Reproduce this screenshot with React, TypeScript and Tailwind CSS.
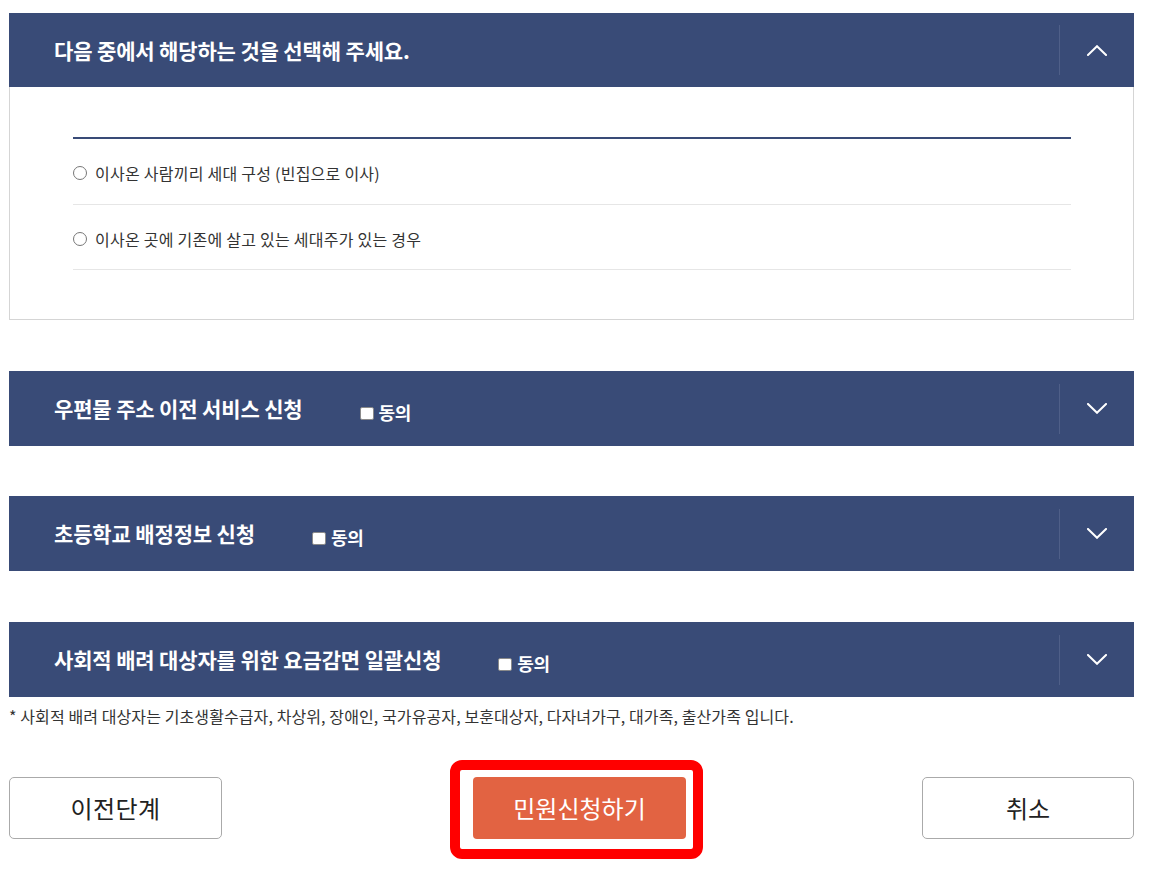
import React from "react";

const FONT = { fontFamily: '"Noto Sans CJK KR", "Noto Sans", sans-serif' };

function Chevron({ up }: { up?: boolean }) {
  return (
    <svg width="20" height="11" viewBox="0 0 20 11" fill="none">
      {up ? (
        <path d="M1 10 L10 1.2 L19 10" stroke="white" strokeWidth="2" strokeLinecap="square" />
      ) : (
        <path d="M1 1 L10 9.8 L19 1" stroke="white" strokeWidth="2" strokeLinecap="square" />
      )}
    </svg>
  );
}

function Header({ title, agree, up, h = "h-[75px]" }: { title: string; agree?: boolean; up?: boolean; h?: string }) {
  return (
    <div className={`flex items-center ${h} bg-[#394b77] pl-[45px]`}>
      <span className="text-white font-bold text-[21px] tracking-[-0.15px] leading-none whitespace-nowrap">{title}</span>
      {agree && (
        <span className="ml-[57px] mt-[6px] flex items-end gap-[5px]">
          <span className="w-[14px] h-[13px] bg-white border border-[#8a8a8a] rounded-[2px] mb-[1px]" />
          <span className="text-white font-bold text-[18px] tracking-[-0.3px] leading-none">동의</span>
        </span>
      )}
      <div className="ml-auto flex items-center h-full">
        <div className="w-px h-[50px] bg-[#4f5f88]" />
        <div className="w-[74px] flex items-center justify-center">
          <Chevron up={up} />
        </div>
      </div>
    </div>
  );
}

function RadioRow({ label, h }: { label: string; h: string }) {
  return (
    <div className={`flex items-center ${h} border-b border-[#e6e6e6] pt-[3px]`}>
      <span className="w-[14px] h-[14px] rounded-full border border-[#777] bg-white mr-[8px]" />
      <span className="text-[16px] tracking-[0.25px] text-[#333] leading-none">{label}</span>
    </div>
  );
}

export default function App() {
  return (
    <div className="w-[1149px] h-[872px] bg-white overflow-hidden" style={FONT}>
      <div className="pt-[13px] pl-[9px] w-[1134px]">
        <Header title="다음 중에서 해당하는 것을 선택해 주세요." up h="h-[74px]" />
        <div className="border border-t-0 border-[#d5d5d5] pl-[63px] pr-[62px] pt-[50px] pb-[49px]">
          <div className="h-[2px] bg-[#394b77]" />
          <RadioRow label="이사온 사람끼리 세대 구성 (빈집으로 이사)" h="h-[66px]" />
          <RadioRow label="이사온 곳에 기존에 살고 있는 세대주가 있는 경우" h="h-[65px]" />
        </div>

        <div className="mt-[51px]">
          <Header title="우편물 주소 이전 서비스 신청" agree />
        </div>
        <div className="mt-[50px]">
          <Header title="초등학교 배정정보 신청" agree />
        </div>
        <div className="mt-[51px]">
          <Header title="사회적 배려 대상자를 위한 요금감면 일괄신청" agree />
        </div>

        <p className="mt-[8px] text-[16px] leading-[22px] text-[#333] tracking-[0.1px] whitespace-nowrap">
          * 사회적 배려 대상자는 기초생활수급자, 차상위, 장애인, 국가유공자, 보훈대상자, 다자녀가구, 대가족, 출산가족 입니다.
        </p>

        <div className="mt-[50px] flex items-center">
          <button className="w-[213px] h-[62px] border border-[#aaa] rounded-[5px] bg-white text-[24px] tracking-[0.4px] text-[#222] leading-none">
            이전단계
          </button>
          <div className="relative ml-[251px]">
            <button className="w-[213px] h-[62px] rounded-[4px] bg-[#e26342] text-white text-[24px] leading-none">
              민원신청하기
            </button>
            <div className="absolute left-[-23px] right-[-17px] top-[-17px] bottom-[-20px] border-[10px] border-[#ff0000] rounded-[12px] pointer-events-none" />
          </div>
          <button className="ml-auto w-[212px] h-[62px] border border-[#aaa] rounded-[5px] bg-white text-[24px] text-[#222] leading-none">
            취소
          </button>
        </div>
      </div>
    </div>
  );
}
